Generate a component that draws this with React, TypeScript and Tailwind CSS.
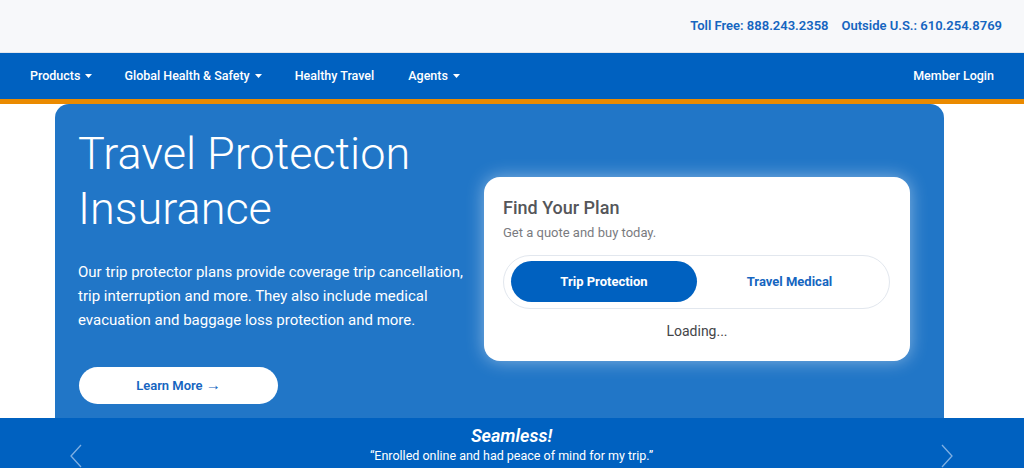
const Caret = () => (
  <svg width="7" height="4" viewBox="0 0 7 4" className="ml-[5px]">
    <path d="M0 0h7L3.5 4z" fill="white" />
  </svg>
);

const Chevron = ({ flip }: { flip?: boolean }) => (
  <svg width="12" height="26" viewBox="0 0 12 26" className={flip ? "mt-[28px] -scale-x-100" : "mt-[28px]"}>
    <polyline points="11,1 1,12 11,23" fill="none" stroke="#7fb0e3" strokeWidth="1.3" />
  </svg>
);

export default function App() {
  return (
    <div className="w-[1024px] h-[468px] overflow-hidden bg-white font-['Roboto',sans-serif]">
      <div className="h-[53px] bg-[#f7f8fa] flex items-center justify-end pr-[22px] gap-[13px] text-[13px] font-semibold text-[#1565c0] border-b border-[#e3e7ee]">
        <span>Toll Free: 888.243.2358</span>
        <span>Outside U.S.: 610.254.8769</span>
      </div>
      <nav className="h-[46px] bg-[#0061c0] flex items-center px-[30px] text-white text-[12.5px] font-medium">
        <div className="flex items-center">
          Products
          <Caret />
        </div>
        <div className="flex items-center ml-[32px]">
          Global Health &amp; Safety
          <Caret />
        </div>
        <div className="ml-[33px]">Healthy Travel</div>
        <div className="flex items-center ml-[34px]">
          Agents
          <Caret />
        </div>
        <div className="ml-auto">Member Login</div>
      </nav>
      <div className="h-[5px] bg-[#ea8a00]" />
      <section className="mx-[55px] w-[889px] h-[314px] bg-[#2176c7] rounded-t-[14px] flex justify-between pl-[23px] pr-[34px]">
        <div className="w-[402px] pt-[22px]">
          <h1 className="text-white text-[45px] font-light leading-[55px]">
            Travel Protection
            <br />
            Insurance
          </h1>
          <p className="mt-[24px] text-white text-[15px] leading-[24px]">
            Our trip protector plans provide coverage trip cancellation, trip interruption and more. They also include medical evacuation and baggage loss protection and more.
          </p>
          <button className="mt-[35px] ml-px w-[199px] h-[37px] rounded-full bg-white text-[#1565c0] text-[13px] font-semibold">
            Learn More <span className="text-[15px]">→</span>
          </button>
        </div>
        <div className="mt-[73px] w-[426px] h-[184px] bg-white rounded-[16px] shadow-[0_0_18px_rgba(255,255,255,0.45)] px-[19px] pt-[20px]">
          <h2 className="text-[18px] font-medium text-[#55565a] leading-[22px]">Find Your Plan</h2>
          <p className="mt-[4px] text-[13px] text-[#7a7b7f]">Get a quote and buy today.</p>
          <div className="mt-[12px] w-[387px] h-[54px] rounded-full border border-[#e2e7ee] flex items-center px-[7px]">
            <div className="w-[186px] h-[41px] rounded-full bg-[#0061c0] text-white text-[13px] font-bold flex items-center justify-center">
              Trip Protection
            </div>
            <div className="flex-1 text-center text-[#1565c0] text-[13px] font-bold">Travel Medical</div>
          </div>
          <div className="mt-[12px] text-center text-[14px] text-[#444548]">Loading...</div>
        </div>
      </section>
      <div className="h-[50px] bg-[#0061c0] flex items-center justify-between pl-[70px] pr-[71px] text-white">
        <Chevron />
        <div className="text-center pt-[4px]">
          <div className="text-[18px] font-semibold italic leading-[22px]">Seamless!</div>
          <div className="text-[12.5px] leading-[18px]">“Enrolled online and had peace of mind for my trip.”</div>
        </div>
        <Chevron flip />
      </div>
    </div>
  );
}
